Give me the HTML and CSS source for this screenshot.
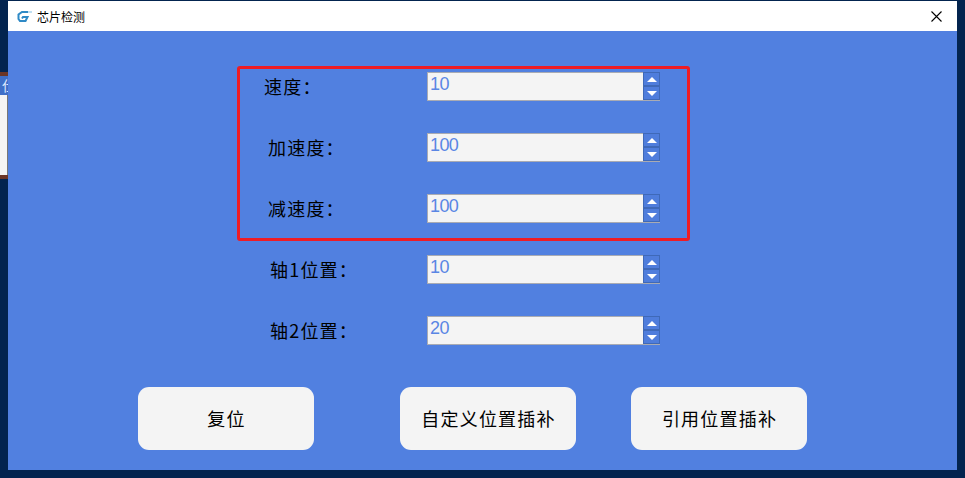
FILE: index.html
```html
<!DOCTYPE html>
<html lang="zh">
<head>
    <meta charset="UTF-8">
    <title>芯片检测</title>
    <link rel="stylesheet" href="styles.css">
</head>
<body>
    <!-- 后面被挡住的窗口 -->
    <div class="back-window">
        <div class="back-title">仕</div>
        <div class="back-body"></div>
    </div>

    <div class="window">
        <header class="title-bar">
            <svg class="logo" width="15" height="11" viewBox="0 0 15 11">
                <path d="M11 1 H5 L1.5 3.5 V8 L3 10 H8.5 L10.5 6 H6 L5 7.5" fill="none" stroke="#2f8ac6" stroke-width="2"/>
                <path d="M11 1 H15" stroke="#a8d4ee" stroke-width="1.5"/>
            </svg>
            <span class="title-text">芯片检测</span>
            <svg class="close-icon" width="11" height="11" viewBox="0 0 11 11">
                <path d="M0.5 0.5 L10.5 10.5 M10.5 0.5 L0.5 10.5" stroke="#000" stroke-width="1.1"/>
            </svg>
        </header>

        <main class="content">
            <div class="highlight-box"></div>

            <div class="form">
                <div class="form-row">
                    <label class="field-label label-short">速度：</label>
                    <div class="spinner">
                        <input class="spinner-input" type="text" value="10" readonly>
                        <div class="spinner-buttons">
                            <button class="spin-btn"><span class="arrow-up"></span></button>
                            <button class="spin-btn"><span class="arrow-down"></span></button>
                        </div>
                    </div>
                </div>
                <div class="form-row">
                    <label class="field-label label-mid">加速度：</label>
                    <div class="spinner">
                        <input class="spinner-input" type="text" value="100" readonly>
                        <div class="spinner-buttons">
                            <button class="spin-btn"><span class="arrow-up"></span></button>
                            <button class="spin-btn"><span class="arrow-down"></span></button>
                        </div>
                    </div>
                </div>
                <div class="form-row">
                    <label class="field-label label-mid">减速度：</label>
                    <div class="spinner">
                        <input class="spinner-input" type="text" value="100" readonly>
                        <div class="spinner-buttons">
                            <button class="spin-btn"><span class="arrow-up"></span></button>
                            <button class="spin-btn"><span class="arrow-down"></span></button>
                        </div>
                    </div>
                </div>
                <div class="form-row">
                    <label class="field-label label-long">轴1位置：</label>
                    <div class="spinner">
                        <input class="spinner-input" type="text" value="10" readonly>
                        <div class="spinner-buttons">
                            <button class="spin-btn"><span class="arrow-up"></span></button>
                            <button class="spin-btn"><span class="arrow-down"></span></button>
                        </div>
                    </div>
                </div>
                <div class="form-row">
                    <label class="field-label label-long">轴2位置：</label>
                    <div class="spinner">
                        <input class="spinner-input" type="text" value="20" readonly>
                        <div class="spinner-buttons">
                            <button class="spin-btn"><span class="arrow-up"></span></button>
                            <button class="spin-btn"><span class="arrow-down"></span></button>
                        </div>
                    </div>
                </div>
            </div>

            <div class="actions">
                <button class="action-btn">复位</button>
                <button class="action-btn">自定义位置插补</button>
                <button class="action-btn">引用位置插补</button>
            </div>
        </main>
    </div>
</body>
</html>
```

FILE: styles.css
```css
body {
    margin: 0;
    padding: 1px 8px 8px;
    height: 478px;
    box-sizing: border-box;
    overflow: hidden;
    background-color: #03244f;
    font-family: "Noto Sans CJK SC", "Liberation Sans", sans-serif;
}
.back-window {
    position: absolute;
    left: 0;
    top: 72px;
    width: 8px;
    height: 107px;
    display: flex;
    flex-direction: column;
    border-top: 4px solid #6b3526;
    border-bottom: 4px solid #6b3526;
    box-sizing: border-box;
}
.back-title {
    height: 19px;
    padding-left: 2px;
    background-color: #3f6fc8;
    color: #dfe9ff;
    font-size: 14px;
    line-height: 19px;
    overflow: hidden;
}
.back-body {
    flex: 1;
    background-color: #f4f4f4;
    border-right: 1px solid #777;
}
.window {
    height: 469px;
    display: flex;
    flex-direction: column;
    background-color: #5180e0;
}
.title-bar {
    height: 30px;
    flex-shrink: 0;
    display: flex;
    align-items: center;
    padding: 0 15px 0 9px;
    background-color: white;
}
.logo {
    flex-shrink: 0;
}
.title-text {
    margin-left: 5px;
    font-size: 12px;
    color: #000;
}
.close-icon {
    margin-left: auto;
}
.content {
    position: relative;
    flex: 1;
    padding-top: 41px;
}
/* 红色标注框 */
.highlight-box {
    position: absolute;
    left: 229px;
    top: 35px;
    width: 453px;
    height: 175px;
    box-sizing: border-box;
    border: 3px solid #ee1c25;
    border-radius: 3px;
}
.form {
    display: flex;
    flex-direction: column;
    gap: 32px;
}
.form-row {
    display: flex;
    align-items: center;
    height: 29px;
    padding-left: 419px;
    position: relative;
}
.field-label {
    position: absolute;
    top: 1px;
    font-size: 18px;
    line-height: 27px;
    letter-spacing: 1.2px;
    color: #000;
    white-space: nowrap;
}
.label-short {
    left: 256px;
}
.label-mid {
    left: 260px;
}
.label-long {
    left: 262px;
}
.spinner {
    display: flex;
    width: 233px;
    height: 29px;
    border-bottom: 1px solid #a9abb3;
    box-sizing: border-box;
}
.spinner-input {
    width: 216px;
    height: 28px;
    padding: 0 0 5px 2px;
    box-sizing: border-box;
    border: none;
    border-top: 1px solid #a9abb3;
    border-left: 1px solid #a9abb3;
    outline: none;
    background-color: #f4f4f4;
    color: #5a86e4;
    font-family: "Liberation Sans", sans-serif;
    font-size: 18px;
    letter-spacing: -0.6px;
}
.spinner-buttons {
    display: flex;
    flex-direction: column;
    width: 17px;
}
.spin-btn {
    flex: 1;
    padding: 0;
    border: 1px solid #3f69b8;
    background-color: #4f7ddc;
    display: flex;
    align-items: center;
    justify-content: center;
}
.arrow-up {
    border-left: 5.5px solid transparent;
    border-right: 5.5px solid transparent;
    border-bottom: 5px solid white;
}
.arrow-down {
    border-left: 5.5px solid transparent;
    border-right: 5.5px solid transparent;
    border-top: 5px solid white;
}
.actions {
    display: flex;
    margin-top: 42px;
    padding-left: 130px;
}
.action-btn {
    width: 176px;
    height: 63px;
    padding: 0 0 2px 1px;
    border: none;
    border-radius: 11px;
    background-color: #f4f4f4;
    color: #000;
    font-family: "Noto Sans CJK SC", sans-serif;
    font-size: 18px;
    letter-spacing: 1.2px;
}
.action-btn:nth-child(2) {
    margin-left: 86px;
}
.action-btn:nth-child(3) {
    margin-left: 55px;
}
```
